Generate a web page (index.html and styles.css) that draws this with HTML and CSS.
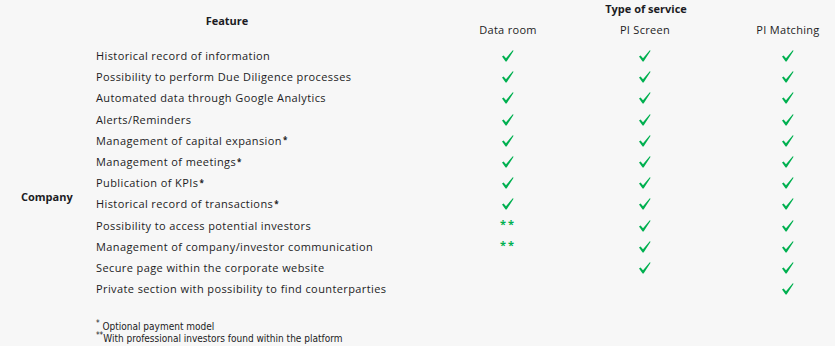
FILE: index.html
```html
<!DOCTYPE html>
<html lang="en">

<head>
    <meta charset="UTF-8">
    <meta name="viewport" content="width=device-width, initial-scale=1.0">
    <title>Type of service</title>
    <link rel="stylesheet" href="styles.css">
</head>

<body>
    <div class="matrix">
        <div class="head-feature">Feature</div>
        <div class="head-type">Type of service</div>
        <div class="head-col">Data room</div>
        <div class="head-col">PI Screen</div>
        <div class="head-col">PI Matching</div>

        <div class="company">Company</div>

        <div class="feat">Historical record of information</div>
        <div class="cell"><svg class="check" viewBox="0 0 12 12"><path d="M0 6.6 L1.6 5.6 L4 8.2 L10.8 0.2 L11.6 0.8 L4.6 11.6 L3.6 11.6 Z"/></svg></div>
        <div class="cell"><svg class="check" viewBox="0 0 12 12"><path d="M0 6.6 L1.6 5.6 L4 8.2 L10.8 0.2 L11.6 0.8 L4.6 11.6 L3.6 11.6 Z"/></svg></div>
        <div class="cell"><svg class="check" viewBox="0 0 12 12"><path d="M0 6.6 L1.6 5.6 L4 8.2 L10.8 0.2 L11.6 0.8 L4.6 11.6 L3.6 11.6 Z"/></svg></div>

        <div class="feat">Possibility to perform Due Diligence processes</div>
        <div class="cell"><svg class="check" viewBox="0 0 12 12"><path d="M0 6.6 L1.6 5.6 L4 8.2 L10.8 0.2 L11.6 0.8 L4.6 11.6 L3.6 11.6 Z"/></svg></div>
        <div class="cell"><svg class="check" viewBox="0 0 12 12"><path d="M0 6.6 L1.6 5.6 L4 8.2 L10.8 0.2 L11.6 0.8 L4.6 11.6 L3.6 11.6 Z"/></svg></div>
        <div class="cell"><svg class="check" viewBox="0 0 12 12"><path d="M0 6.6 L1.6 5.6 L4 8.2 L10.8 0.2 L11.6 0.8 L4.6 11.6 L3.6 11.6 Z"/></svg></div>

        <div class="feat">Automated data through Google Analytics</div>
        <div class="cell"><svg class="check" viewBox="0 0 12 12"><path d="M0 6.6 L1.6 5.6 L4 8.2 L10.8 0.2 L11.6 0.8 L4.6 11.6 L3.6 11.6 Z"/></svg></div>
        <div class="cell"><svg class="check" viewBox="0 0 12 12"><path d="M0 6.6 L1.6 5.6 L4 8.2 L10.8 0.2 L11.6 0.8 L4.6 11.6 L3.6 11.6 Z"/></svg></div>
        <div class="cell"><svg class="check" viewBox="0 0 12 12"><path d="M0 6.6 L1.6 5.6 L4 8.2 L10.8 0.2 L11.6 0.8 L4.6 11.6 L3.6 11.6 Z"/></svg></div>

        <div class="feat">Alerts/Reminders</div>
        <div class="cell"><svg class="check" viewBox="0 0 12 12"><path d="M0 6.6 L1.6 5.6 L4 8.2 L10.8 0.2 L11.6 0.8 L4.6 11.6 L3.6 11.6 Z"/></svg></div>
        <div class="cell"><svg class="check" viewBox="0 0 12 12"><path d="M0 6.6 L1.6 5.6 L4 8.2 L10.8 0.2 L11.6 0.8 L4.6 11.6 L3.6 11.6 Z"/></svg></div>
        <div class="cell"><svg class="check" viewBox="0 0 12 12"><path d="M0 6.6 L1.6 5.6 L4 8.2 L10.8 0.2 L11.6 0.8 L4.6 11.6 L3.6 11.6 Z"/></svg></div>

        <div class="feat">Management of capital expansion<sup>*</sup></div>
        <div class="cell"><svg class="check" viewBox="0 0 12 12"><path d="M0 6.6 L1.6 5.6 L4 8.2 L10.8 0.2 L11.6 0.8 L4.6 11.6 L3.6 11.6 Z"/></svg></div>
        <div class="cell"><svg class="check" viewBox="0 0 12 12"><path d="M0 6.6 L1.6 5.6 L4 8.2 L10.8 0.2 L11.6 0.8 L4.6 11.6 L3.6 11.6 Z"/></svg></div>
        <div class="cell"><svg class="check" viewBox="0 0 12 12"><path d="M0 6.6 L1.6 5.6 L4 8.2 L10.8 0.2 L11.6 0.8 L4.6 11.6 L3.6 11.6 Z"/></svg></div>

        <div class="feat">Management of meetings<sup>*</sup></div>
        <div class="cell"><svg class="check" viewBox="0 0 12 12"><path d="M0 6.6 L1.6 5.6 L4 8.2 L10.8 0.2 L11.6 0.8 L4.6 11.6 L3.6 11.6 Z"/></svg></div>
        <div class="cell"><svg class="check" viewBox="0 0 12 12"><path d="M0 6.6 L1.6 5.6 L4 8.2 L10.8 0.2 L11.6 0.8 L4.6 11.6 L3.6 11.6 Z"/></svg></div>
        <div class="cell"><svg class="check" viewBox="0 0 12 12"><path d="M0 6.6 L1.6 5.6 L4 8.2 L10.8 0.2 L11.6 0.8 L4.6 11.6 L3.6 11.6 Z"/></svg></div>

        <div class="feat">Publication of KPIs<sup>*</sup></div>
        <div class="cell"><svg class="check" viewBox="0 0 12 12"><path d="M0 6.6 L1.6 5.6 L4 8.2 L10.8 0.2 L11.6 0.8 L4.6 11.6 L3.6 11.6 Z"/></svg></div>
        <div class="cell"><svg class="check" viewBox="0 0 12 12"><path d="M0 6.6 L1.6 5.6 L4 8.2 L10.8 0.2 L11.6 0.8 L4.6 11.6 L3.6 11.6 Z"/></svg></div>
        <div class="cell"><svg class="check" viewBox="0 0 12 12"><path d="M0 6.6 L1.6 5.6 L4 8.2 L10.8 0.2 L11.6 0.8 L4.6 11.6 L3.6 11.6 Z"/></svg></div>

        <div class="feat">Historical record of transactions<sup>*</sup></div>
        <div class="cell"><svg class="check" viewBox="0 0 12 12"><path d="M0 6.6 L1.6 5.6 L4 8.2 L10.8 0.2 L11.6 0.8 L4.6 11.6 L3.6 11.6 Z"/></svg></div>
        <div class="cell"><svg class="check" viewBox="0 0 12 12"><path d="M0 6.6 L1.6 5.6 L4 8.2 L10.8 0.2 L11.6 0.8 L4.6 11.6 L3.6 11.6 Z"/></svg></div>
        <div class="cell"><svg class="check" viewBox="0 0 12 12"><path d="M0 6.6 L1.6 5.6 L4 8.2 L10.8 0.2 L11.6 0.8 L4.6 11.6 L3.6 11.6 Z"/></svg></div>

        <div class="feat">Possibility to access potential investors</div>
        <div class="cell"><span class="stars">**</span></div>
        <div class="cell"><svg class="check" viewBox="0 0 12 12"><path d="M0 6.6 L1.6 5.6 L4 8.2 L10.8 0.2 L11.6 0.8 L4.6 11.6 L3.6 11.6 Z"/></svg></div>
        <div class="cell"><svg class="check" viewBox="0 0 12 12"><path d="M0 6.6 L1.6 5.6 L4 8.2 L10.8 0.2 L11.6 0.8 L4.6 11.6 L3.6 11.6 Z"/></svg></div>

        <div class="feat">Management of company/investor communication</div>
        <div class="cell"><span class="stars">**</span></div>
        <div class="cell"><svg class="check" viewBox="0 0 12 12"><path d="M0 6.6 L1.6 5.6 L4 8.2 L10.8 0.2 L11.6 0.8 L4.6 11.6 L3.6 11.6 Z"/></svg></div>
        <div class="cell"><svg class="check" viewBox="0 0 12 12"><path d="M0 6.6 L1.6 5.6 L4 8.2 L10.8 0.2 L11.6 0.8 L4.6 11.6 L3.6 11.6 Z"/></svg></div>

        <div class="feat">Secure page within the corporate website</div>
        <div class="cell"></div>
        <div class="cell"><svg class="check" viewBox="0 0 12 12"><path d="M0 6.6 L1.6 5.6 L4 8.2 L10.8 0.2 L11.6 0.8 L4.6 11.6 L3.6 11.6 Z"/></svg></div>
        <div class="cell"><svg class="check" viewBox="0 0 12 12"><path d="M0 6.6 L1.6 5.6 L4 8.2 L10.8 0.2 L11.6 0.8 L4.6 11.6 L3.6 11.6 Z"/></svg></div>

        <div class="feat">Private section with possibility to find counterparties</div>
        <div class="cell"></div>
        <div class="cell"></div>
        <div class="cell"><svg class="check" viewBox="0 0 12 12"><path d="M0 6.6 L1.6 5.6 L4 8.2 L10.8 0.2 L11.6 0.8 L4.6 11.6 L3.6 11.6 Z"/></svg></div>
    </div>

    <!-- notas de rodapé -->
    <div class="notes">
        <p><sup>*</sup> Optional payment model</p>
        <p><sup>**</sup>With professional investors found within the platform</p>
    </div>
</body>

</html>
```

FILE: styles.css
```css
html {
    overflow: hidden;
}

body {
    margin: 0;
    background-color: #f7f7f7;
    color: #1c1c24;
    font-family: 'Open Sans', 'Liberation Sans', sans-serif;
    font-size: 11px;
    letter-spacing: 0.4px;
}

.matrix {
    display: grid;
    width: 862px;
    grid-template-columns: 96px 344px 136px 138px 148px;
    grid-template-rows: 18px 27.5px repeat(12, 21.2px);
}

.head-feature {
    grid-column: 1 / 3;
    grid-row: 1 / 3;
    align-self: start;
    line-height: 42px;
    padding-left: 14px;
    text-align: center;
    font-weight: bold;
    letter-spacing: 0;
}

.head-type {
    grid-column: 3 / 6;
    grid-row: 1;
    line-height: 18px;
    padding-right: 10px;
    text-align: center;
    font-weight: bold;
    letter-spacing: 0;
}

.head-col {
    grid-row: 2;
    align-self: start;
    line-height: 24px;
    text-align: center;
    letter-spacing: 0.3px;
}

.company {
    grid-column: 1;
    grid-row: 3 / 15;
    align-self: start;
    padding: 143px 0 0 21px;
    font-weight: bold;
    letter-spacing: 0;
}

.feat {
    grid-column: 2;
    display: flex;
    align-items: center;
    padding-bottom: 1px;
}

.feat sup {
    font-size: 8px;
    font-weight: bold;
    line-height: 0;
    margin-left: 1px;
}

.notes sup {
    font-size: 8px;
    line-height: 0;
}

.cell {
    display: flex;
    align-items: center;
    justify-content: center;
}

.check {
    width: 12px;
    height: 12px;
    fill: #00b050;
}

.stars {
    color: #00b050;
    font-weight: bold;
    font-size: 11px;
    letter-spacing: 2px;
    margin-top: -5px;
}

.notes {
    margin-top: 21px;
    padding-left: 96px;
    font-family: 'Liberation Sans Narrow', 'DejaVu Sans Condensed', sans-serif;
    font-size: 10px;
    letter-spacing: 0;
}

.notes p {
    margin: 0;
    line-height: 12px;
}
```
